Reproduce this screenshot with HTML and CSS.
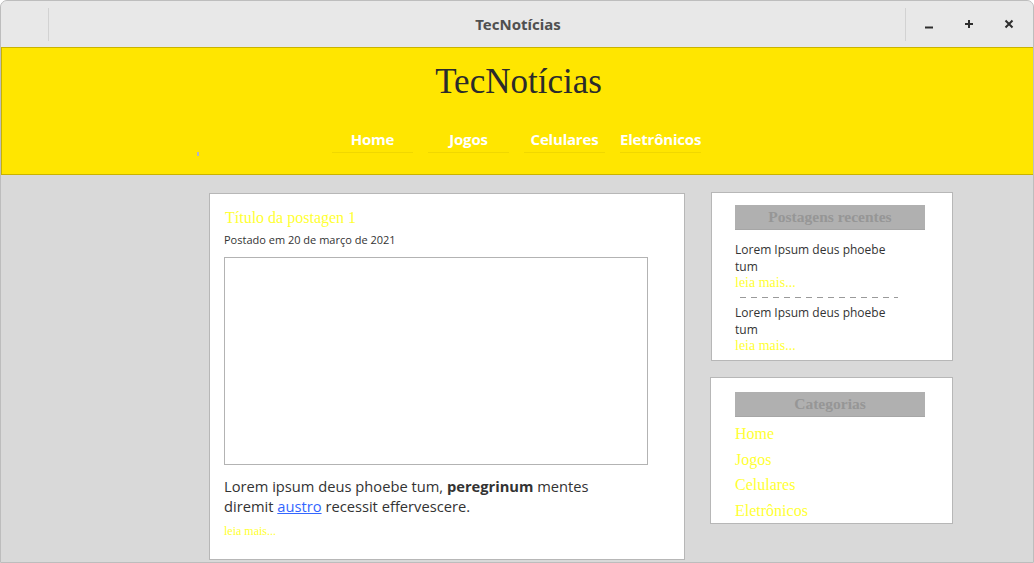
FILE: index.html
```html
<!DOCTYPE html>
<html lang="pt-BR">
<head>
<meta charset="utf-8">
<title>TecNotícias</title>
<link rel="stylesheet" href="styles.css">
</head>
<body>
<div class="window">
  <div class="titlebar">
    <div class="tb-left"></div>
    <div class="tb-title">TecNotícias</div>
    <div class="tb-controls">
      <button class="tb-btn" aria-label="Minimizar"><svg width="10" height="10" viewBox="0 0 10 10"><path d="M1 8.5h8" stroke="#2e2e2e" stroke-width="2"/></svg></button>
      <button class="tb-btn" aria-label="Maximizar"><svg width="10" height="10" viewBox="0 0 10 10"><path d="M1 5h8M5 1v8" stroke="#2e2e2e" stroke-width="2"/></svg></button>
      <button class="tb-btn" aria-label="Fechar"><svg width="10" height="10" viewBox="0 0 10 10"><path d="M1.5 1.5l7 7M8.5 1.5l-7 7" stroke="#2e2e2e" stroke-width="2"/></svg></button>
    </div>
  </div>

  <header class="site-header">
    <h1 class="site-title">TecNotícias</h1>
    <nav class="nav">
      <span class="nav-mark"></span>
      <ul class="nav-list">
        <li><a href="#">Home</a></li>
        <li><a href="#">Jogos</a></li>
        <li><a href="#">Celulares</a></li>
        <li><a href="#">Eletrônicos</a></li>
      </ul>
    </nav>
  </header>

  <div class="content">
    <article class="post">
      <h2 class="post-title">Título da postagen 1</h2>
      <p class="post-meta">Postado em 20 de março de 2021</p>
      <div class="post-image"></div>
      <p class="post-text">Lorem ipsum deus phoebe tum, <strong>peregrinum</strong> mentes diremit <a href="#">austro</a> recessit effervescere.</p>
      <a class="read-more small" href="#">leia mais...</a>
    </article>

    <aside class="sidebar">
      <section class="widget recent">
        <h3 class="widget-title">Postagens recentes</h3>
        <div class="recent-item">
          <p>Lorem Ipsum deus phoebe tum</p>
          <a class="read-more" href="#">leia mais...</a>
        </div>
        <div class="divider"></div>
        <div class="recent-item">
          <p>Lorem Ipsum deus phoebe tum</p>
          <a class="read-more" href="#">leia mais...</a>
        </div>
      </section>
      <section class="widget categories">
        <h3 class="widget-title">Categorias</h3>
        <ul class="cat-list">
          <li><a href="#">Home</a></li>
          <li><a href="#">Jogos</a></li>
          <li><a href="#">Celulares</a></li>
          <li><a href="#">Eletrônicos</a></li>
        </ul>
      </section>
    </aside>
  </div>
</div>
</body>
</html>
```

FILE: styles.css
```css
* { box-sizing: border-box; }
html, body { margin: 0; padding: 0; background: #ffffff; }
body { width: 1034px; height: 563px; overflow: hidden; }

.window {
  width: 1034px;
  height: 563px;
  border: 1px solid #bdbdbd;
  border-radius: 7px 7px 0 0;
  background: #d9d9d9;
  overflow: hidden;
  display: flex;
  flex-direction: column;
}

/* title bar */
.titlebar {
  height: 46px;
  flex: none;
  background: #e8e8e8;
  display: grid;
  grid-template-columns: 1fr auto 1fr;
  align-items: center;
  font-family: "Noto Sans", "DejaVu Sans", sans-serif;
}
.tb-left {
  justify-self: start;
  width: 48px;
  height: 33px;
  border-right: 1px solid #d2d2d2;
}
.tb-title {
  text-align: center;
  font-size: 15px;
  font-weight: 700;
  color: #505050;
  padding-left: 2px;
}
.tb-controls {
  justify-self: end;
  height: 33px;
  border-left: 1px solid #d2d2d2;
  display: flex;
  align-items: center;
  padding-left: 13px;
  padding-right: 14px;
  gap: 20px;
}
.tb-btn {
  width: 20px;
  height: 20px;
  padding: 0;
  border: 0;
  background: none;
  display: flex;
  align-items: center;
  justify-content: center;
}
.tb-btn svg { display: block; }

/* site header */
.site-header {
  flex: none;
  height: 128px;
  background: #ffe600;
  border: 1px solid #c9b300;
  border-right: 0;
  display: flex;
  flex-direction: column;
  align-items: stretch;
}
.site-title {
  margin: 14px 0 0 0;
  text-align: center;
  font-family: "Liberation Serif", "Times New Roman", serif;
  font-weight: 400;
  font-size: 35px;
  line-height: 40px;
  color: #2b2b2b;
  padding-left: 2px;
}
.nav {
  display: flex;
  align-items: flex-end;
  padding-left: 195px;
  margin-top: 26px;
}
.nav-mark {
  width: 2px;
  height: 4px;
  background: #b3b3c8;
  margin-bottom: -3px;
}
.nav-list {
  list-style: none;
  margin: 0 0 0 133px;
  padding: 0;
  display: flex;
  gap: 15px;
}
.nav-list li { width: 81px; }
.nav-list a {
  display: block;
  text-align: center;
  white-space: nowrap;
  text-decoration: none;
  color: #ffffff;
  font-family: "Open Sans", "Noto Sans", sans-serif;
  font-weight: 700;
  font-size: 15px;
  letter-spacing: -0.2px;
  line-height: 22px;
  padding-bottom: 2px;
  border-bottom: 1px solid #f0d800;
}

/* content */
.content {
  flex: 1;
  display: flex;
  align-items: flex-start;
  padding: 18px 0 0 208px;
  gap: 25px;
}

.post {
  width: 476px;
  height: 367px;
  flex: none;
  background: #ffffff;
  border: 1px solid #b7b7b7;
  padding: 14px 15px 0 14px;
}
.post-title {
  margin: 0 0 0 1px;
  font-family: "Liberation Serif", "Times New Roman", serif;
  font-weight: 400;
  font-size: 16px;
  line-height: 20px;
  color: #ffff33;
}
.post-meta {
  margin: 4px 0 0 0;
  font-family: "Open Sans", "Noto Sans", sans-serif;
  font-size: 11px;
  line-height: 15px;
  color: #333333;
}
.post-image {
  margin-top: 10px;
  width: 424px;
  height: 208px;
  border: 1px solid #b3b3b3;
}
.post-text {
  margin: 11px 0 0 0;
  width: 380px;
  font-family: "Open Sans", "Noto Sans", sans-serif;
  font-size: 14.7px;
  line-height: 20px;
  color: #333333;
}
.post-text strong { font-weight: 700; }
.post-text a { color: #3366ff; text-decoration: underline; }

.read-more {
  display: block;
  font-family: "Liberation Serif", "Times New Roman", serif;
  font-size: 14px;
  line-height: 15px;
  color: #ffff33;
  text-decoration: none;
}
.read-more.small {
  font-size: 12px;
  margin-top: 8px;
}

/* sidebar */
.sidebar {
  width: 243px;
  flex: none;
  display: flex;
  flex-direction: column;
  gap: 16px;
  margin-top: -1px;
}
.widget {
  background: #ffffff;
  border: 1px solid #b7b7b7;
  padding: 12px 27px 0 24px;
}
.widget-title {
  margin: 0;
  height: 25px;
  background: #b0b0b0;
  border-bottom: 1px solid #a6a6a6;
  text-align: center;
  font-family: "Liberation Serif", "Times New Roman", serif;
  font-weight: 700;
  font-size: 15.5px;
  line-height: 24px;
  color: #969696;
}
.recent {
  height: 169px;
  margin-left: 1px;
  padding-left: 23px;
  padding-right: 27px;
}
.recent-item { width: 165px; }
.recent-item p {
  margin: 0;
  font-family: "Open Sans", "Noto Sans", sans-serif;
  font-size: 12px;
  line-height: 17px;
  color: #333333;
}
.recent .widget-title + .recent-item { margin-top: 11px; }
.divider {
  margin: 7px 0 6px 5px;
  width: 158px;
  height: 1px;
  background: repeating-linear-gradient(to right, #9a9a9a 0 6px, transparent 6px 11px);
}

.categories { height: 147px; padding-top: 14px; }
.cat-list {
  list-style: none;
  margin: 5px 0 0 0;
  padding: 0;
}
.cat-list li { height: 25.5px; }
.cat-list a {
  font-family: "Liberation Serif", "Times New Roman", serif;
  font-size: 16px;
  line-height: 24px;
  color: #ffff33;
  text-decoration: none;
}
```
